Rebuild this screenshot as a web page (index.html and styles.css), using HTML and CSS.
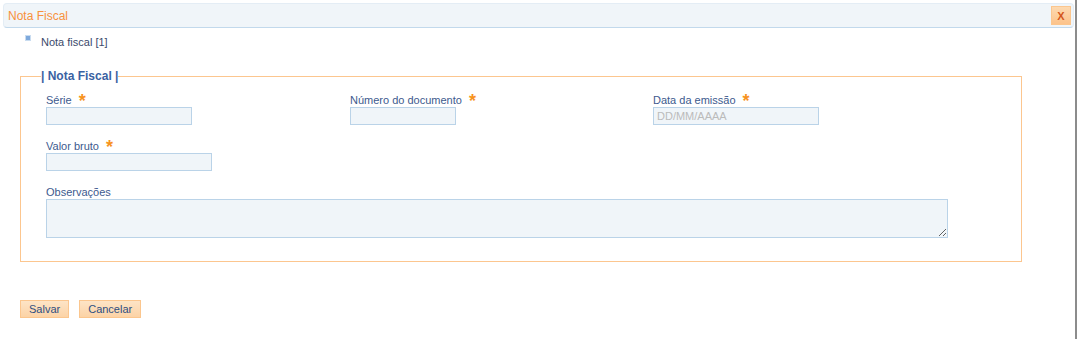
FILE: index.html
```html
<!DOCTYPE html>
<html lang="pt-BR">
<head>
    <meta charset="UTF-8">
    <meta name="viewport" content="width=device-width, initial-scale=1.0">
    <title>Nota Fiscal</title>
    <link rel="stylesheet" href="styles.css">
</head>
<body>
    <div class="dialog">
        <header class="dialog-header">
            <span class="dialog-title">Nota Fiscal</span>
            <button class="dialog-close" title="Fechar">X</button>
        </header>

        <ul class="tabs">
            <li><span class="tab-bullet"></span>Nota fiscal [1]</li>
        </ul>

        <fieldset class="nf-box">
            <legend>| Nota Fiscal |</legend>

            <div class="nf-row">
                <div class="field">
                    <label for="serie">Série <span class="req">*</span></label>
                    <input type="text" id="serie" class="w-serie">
                </div>
                <div class="field">
                    <label for="numero">Número do documento <span class="req">*</span></label>
                    <input type="text" id="numero" class="w-numero">
                </div>
                <div class="field">
                    <label for="data">Data da emissão <span class="req">*</span></label>
                    <input type="text" id="data" class="w-data" placeholder="DD/MM/AAAA">
                </div>
            </div>

            <div class="nf-row">
                <div class="field">
                    <label for="valor">Valor bruto <span class="req">*</span></label>
                    <input type="text" id="valor" class="w-valor">
                </div>
            </div>

            <div class="field">
                <label for="obs">Observações</label>
                <textarea id="obs"></textarea>
            </div>
        </fieldset>

        <div class="actions">
            <button class="btn">Salvar</button>
            <button class="btn">Cancelar</button>
        </div>
    </div>
</body>
</html>
```

FILE: styles.css
```css
body {
    margin: 0;
    background-color: #fff;
    font-family: 'Liberation Sans', Arial, sans-serif;
    font-size: 11px;
    color: #3b4a6b;
}
.dialog {
    width: 1077px;
    height: 339px;
    border-right: 2px solid #8c8c8c;
    box-sizing: border-box;
    padding-top: 3px;
}
.dialog-header {
    display: flex;
    align-items: center;
    justify-content: space-between;
    height: 23px;
    margin: 0 1px 0 3px;
    padding: 0 2px 0 4px;
    background-color: #f0f5f9;
    border: 1px solid #e4edf5;
    border-bottom: 1px solid #c2d9ec;
    border-radius: 4px;
}
.dialog-title {
    color: #f7913d;
    font-size: 12px;
}
.dialog-close {
    width: 20px;
    height: 19px;
    padding: 0;
    border: 1px solid #fbc68e;
    background: linear-gradient(#fdd9b0, #fcc38b);
    color: #d4561c;
    font-family: 'Liberation Sans', Arial, sans-serif;
    font-size: 11px;
    font-weight: bold;
    cursor: pointer;
}
.tabs {
    list-style: none;
    margin: 7px 0 0 25px;
    padding: 0;
    line-height: 14px;
}
.tab-bullet {
    display: inline-block;
    width: 4px;
    height: 4px;
    margin-right: 10px;
    vertical-align: 5px;
    background-color: #7ea9dc;
    border: 1px solid #c9dcf0;
}
.nf-box {
    margin: 20px 53px 0 20px;
    padding: 10px 25px 23px;
    border: 1px solid #fcc68f;
}
.nf-box legend {
    margin-left: -5px;
    padding: 0;
    color: #3a62a2;
    font-size: 12px;
    font-weight: bold;
    line-height: 14px;
}
.nf-row {
    display: grid;
    grid-template-columns: 304px 303px 1fr;
    margin-bottom: 14px;
}
.field label {
    display: block;
    height: 14px;
    line-height: 14px;
    color: #3d5a8e;
}
.req {
    color: #f7931e;
    font-size: 18px;
    font-weight: bold;
    line-height: 0;
    margin-left: 4px;
    vertical-align: -3px;
}
.field input, .field textarea {
    display: block;
    box-sizing: border-box;
    margin: 0;
    padding: 0 3px;
    height: 18px;
    background-color: #f0f5f9;
    border: 1px solid #bad3e8;
    font-family: 'Liberation Sans', Arial, sans-serif;
    font-size: 11px;
    color: #333;
}
.field input::placeholder {
    color: #bbbbbb;
}
.w-serie { width: 146px; }
.w-numero { width: 106px; }
.w-data { width: 166px; }
.w-valor { width: 166px; }
.field textarea {
    width: 902px;
    height: 39px;
}
.actions {
    display: flex;
    gap: 10px;
    margin: 38px 0 0 20px;
}
.btn {
    height: 18px;
    padding: 0 8px;
    background: linear-gradient(#fde4c6, #fcd3a6);
    border: 1px solid #fbc68e;
    color: #2e4f82;
    font-family: 'Liberation Sans', Arial, sans-serif;
    font-size: 11px;
    cursor: pointer;
}
```
